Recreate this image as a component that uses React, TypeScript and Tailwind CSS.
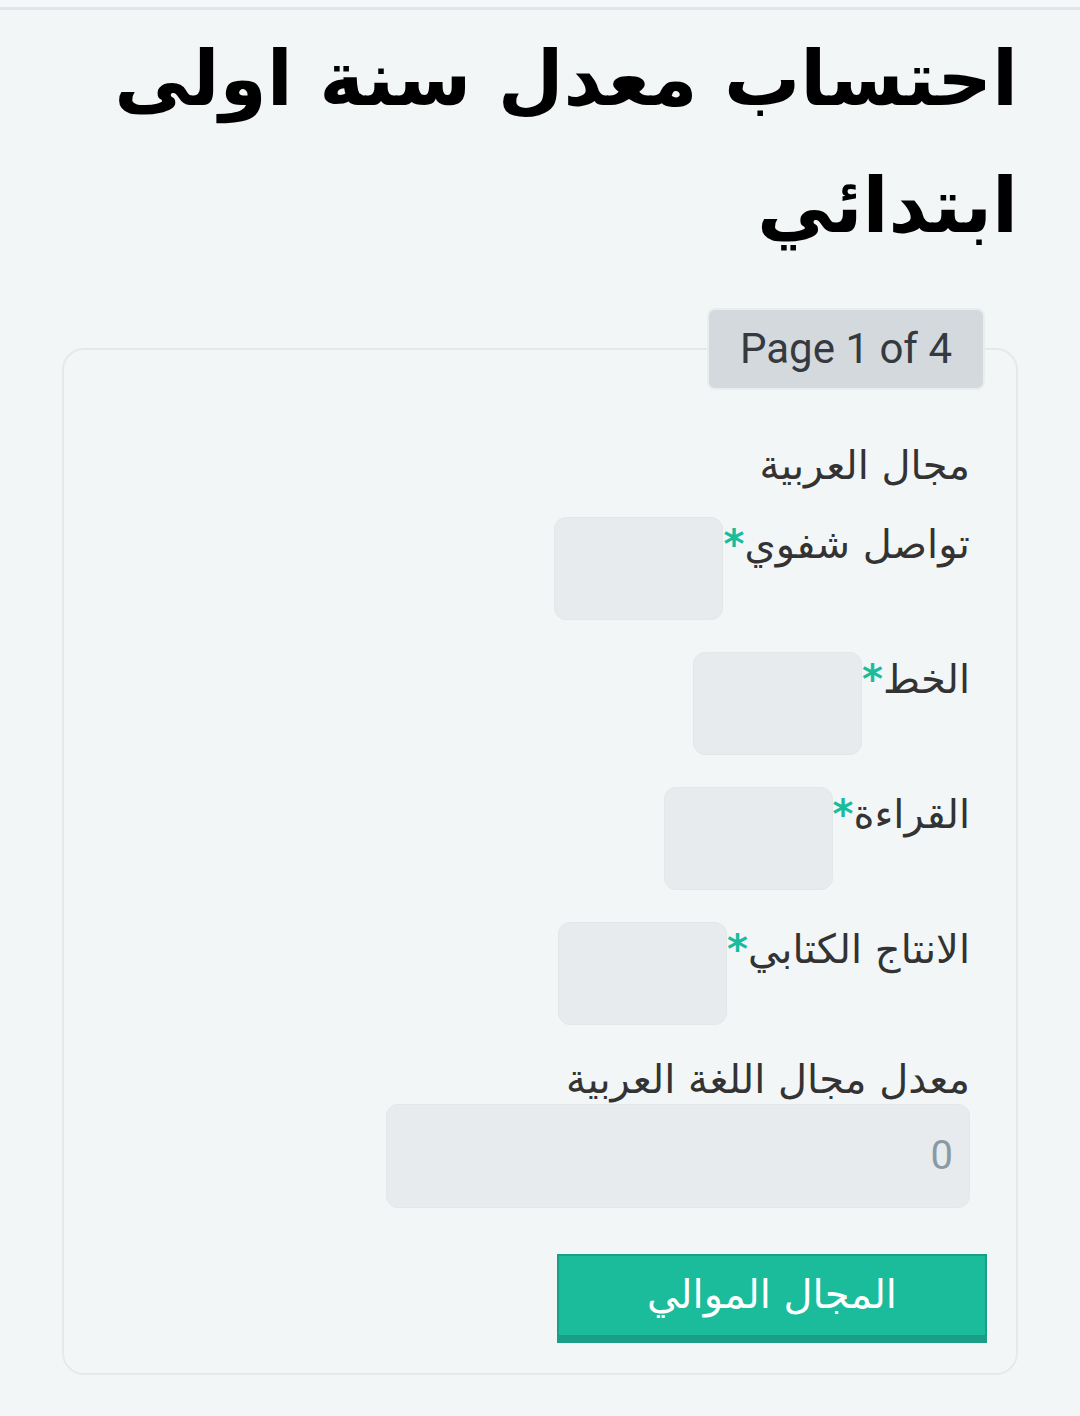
import React from "react";

const fields = [
  { label: "تواصل شفوي" },
  { label: "الخط" },
  { label: "القراءة" },
  { label: "الانتاج الكتابي" },
];

export default function App() {
  return (
    <div
      dir="rtl"
      className="min-h-[1416px] w-[1080px] bg-[#f3f6f7] text-[#333]"
      style={{ fontFamily: '"DejaVu Sans", "Noto Sans", sans-serif' }}
    >
      <div className="h-[7px] bg-[#f4f8fa]" />
      <div className="h-[3px] bg-[#dfe5e8]" />

      <h1 className="mr-[62px] ml-[62px] mt-[5px] text-[76px] font-bold leading-[127px] text-black">
        احتساب معدل سنة اولى ابتدائي
      </h1>

      <fieldset className="mx-[62px] mt-[39px] rounded-[22px] border-2 border-[#e5e9eb] pr-[46px] pl-[46px] pb-[30px]">
        <legend className="-mr-[15px] rounded-[8px] border-2 border-[#e9edef] bg-[#d3d9dd] px-[31px] py-[12px] text-[42px] leading-[54px] text-[#343a40] [font-family:Roboto,sans-serif]">
          Page 1 of 4
        </legend>

        <div className="mt-[47px] text-[40px] leading-[56px]">مجال العربية</div>

        <div className="mt-[24px] flex flex-col gap-[32px]">
          {fields.map((f) => (
            <div key={f.label} className="flex items-start">
              <label className="text-[40px] leading-[54px]">
                {f.label}
                <span className="font-bold text-[#1abc9c]">*</span>
              </label>
              <div className="h-[103px] w-[169px] rounded-[12px] border border-[#e3e7ea] bg-[#e7ebee]" />
            </div>
          ))}
        </div>

        <div className="mt-[30px] text-[40px] leading-[49px]">معدل مجال اللغة العربية</div>
        <div className="flex">
          <div className="relative flex h-[104px] w-[584px] items-center rounded-[12px] border border-[#e3e7ea] bg-[#e7ebee] px-[16px] text-[40px] text-[#8a9aa5] [font-family:Roboto,sans-serif]">
            0
          </div>
        </div>

        <div className="mt-[46px] flex">
          <button className="-mr-[17px] flex h-[89px] w-[430px] items-center justify-center border-2 border-b-[8px] border-[#1a9e85] bg-[#1abc9c] pb-[4px] text-[40px] text-white">
            المجال الموالي
          </button>
        </div>
      </fieldset>
    </div>
  );
}
